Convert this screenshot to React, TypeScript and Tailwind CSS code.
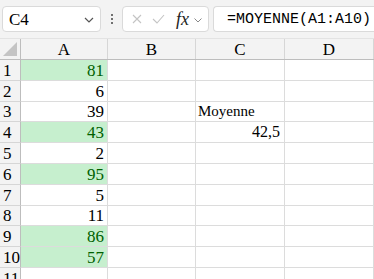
import React from "react";

const data: { v: string; green: boolean }[] = [
  { v: "81", green: true },
  { v: "6", green: false },
  { v: "39", green: false },
  { v: "43", green: true },
  { v: "2", green: false },
  { v: "95", green: true },
  { v: "5", green: false },
  { v: "11", green: false },
  { v: "86", green: true },
  { v: "57", green: true },
];

const heights = [21, 21, 20, 21, 21, 21, 21, 20, 21, 21, 21];

export default function App() {
  return (
    <div className="w-[374px] h-[279px] overflow-hidden bg-white font-['Liberation_Serif','Times_New_Roman',serif]">
      {/* toolbar */}
      <div className="h-[38px] bg-[#f3f3f3] flex items-center pl-[2px]">
        <div className="w-[99px] h-[26px] bg-white border border-[#dadada] rounded-[4px] flex items-center pl-[6px] pr-[6px] justify-between">
          <span className="text-[17px] text-black leading-none">C4</span>
          <svg width="10" height="6" viewBox="0 0 10 6" className="mt-[2px]">
            <path d="M1 1 L5 5 L9 1" fill="none" stroke="#555" strokeWidth="1.2" />
          </svg>
        </div>
        <div className="w-[21px] flex flex-col items-center justify-center gap-[2px]">
          <div className="w-[2px] h-[2px] bg-[#444] rounded-full" />
          <div className="w-[2px] h-[2px] bg-[#444] rounded-full" />
          <div className="w-[2px] h-[2px] bg-[#444] rounded-full" />
        </div>
        <div className="w-[87px] h-[26px] bg-white border border-[#dadada] rounded-[4px] flex items-center pl-[9px]">
          <svg width="10" height="10" viewBox="0 0 10 10">
            <path d="M1 1 L9 9 M9 1 L1 9" stroke="#c4c4c4" strokeWidth="1.1" />
          </svg>
          <svg width="13" height="10" viewBox="0 0 13 10" className="ml-[10px]">
            <path d="M1 5 L5 9 L12 1" fill="none" stroke="#c4c4c4" strokeWidth="1.1" />
          </svg>
          <span className="ml-[11px] text-[18px] italic leading-none text-[#222]">fx</span>
          <svg width="8" height="5" viewBox="0 0 8 5" className="ml-[5px] mt-[2px]">
            <path d="M0.5 0.5 L4 4 L7.5 0.5" fill="none" stroke="#888" strokeWidth="1" />
          </svg>
        </div>
        <div className="ml-[4px] flex-1 h-[26px] bg-white border border-[#dadada] border-r-0 rounded-l-[4px] flex items-center pl-[13px]">
          <span className="text-[15px] text-black leading-none whitespace-nowrap font-['Liberation_Mono','DejaVu_Sans_Mono',monospace]">
            =MOYENNE(A1:A10)
          </span>
        </div>
      </div>

      {/* column headers */}
      <div className="flex h-[22px] bg-[#f3f3f3] border-t border-[#e3e3e3] border-b border-b-[#bdbdbd]">
        <div className="w-[21px] border-r border-[#bdbdbd] relative">
          <svg width="14" height="14" viewBox="0 0 14 14" className="absolute right-[3px] bottom-[3px]">
            <path d="M14 0 L14 14 L0 14 Z" fill="#c4c4c4" />
          </svg>
        </div>
        {["A", "B", "C", "D"].map((c, i) => (
          <div
            key={c}
            className={`flex items-center justify-center pt-[1px] text-[17px] text-black border-r border-[#d6d6d6] ${
              i === 0 ? "w-[87px]" : i === 1 ? "w-[88px]" : i === 2 ? "w-[89px]" : "flex-1"
            }`}
          >
            {c}
          </div>
        ))}
      </div>

      {/* rows */}
      {heights.map((h, r) => {
        const d = data[r];
        return (
          <div key={r} className="flex" style={{ height: h }}>
            <div className="w-[21px] bg-[#f3f3f3] border-r border-[#bdbdbd] border-b border-b-[#d6d6d6] flex items-center pl-[3px] text-[17px] text-black leading-none">
              {r + 1}
            </div>
            <div
              className={`w-[87px] border-r border-b border-[#dcdcdc] flex items-center justify-end pr-[3px] text-[17px] leading-none ${
                d && d.green ? "bg-[#c6efce] text-[#006100]" : "text-black"
              }`}
            >
              {d ? d.v : ""}
            </div>
            <div className="w-[88px] border-r border-b border-[#dcdcdc]" />
            <div className="w-[89px] border-r border-b border-[#dcdcdc] flex items-center text-[15px] leading-none text-black">
              {r === 2 && <span className="pl-[2px]">Moyenne</span>}
              {r === 3 && <span className="ml-auto pr-[4px] text-[16px]">42,5</span>}
            </div>
            <div className="flex-1 border-r border-b border-[#dcdcdc]" />
          </div>
        );
      })}
    </div>
  );
}
